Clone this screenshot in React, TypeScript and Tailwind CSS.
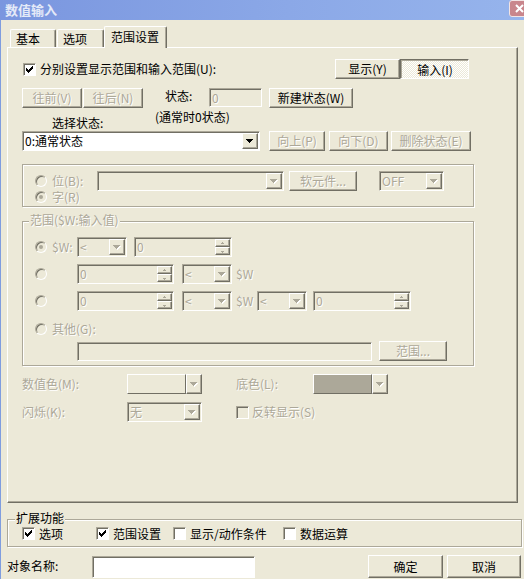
import React from "react";

const D = "text-[#ACA899] [text-shadow:1px_1px_0_#fff]";
const RAISED =
  "border border-t-white border-l-white border-r-[#716F64] border-b-[#716F64] shadow-[inset_-1px_-1px_0_#ACA899]";
const SUNKEN =
  "border border-t-[#ACA899] border-l-[#ACA899] border-r-white border-b-white shadow-[inset_1px_1px_0_#716F64]";
const ETCHED = "border border-[#ACA899] shadow-[inset_1px_1px_0_#fff,1px_1px_0_#fff]";

function Arrow({ disabled }: { disabled?: boolean }) {
  const rows = (dx: number, dy: number, fill: string) => (
    <g fill={fill}>
      <rect x={0 + dx} y={0 + dy} width={7} height={1} />
      <rect x={1 + dx} y={1 + dy} width={5} height={1} />
      <rect x={2 + dx} y={2 + dy} width={3} height={1} />
      <rect x={3 + dx} y={3 + dy} width={1} height={1} />
    </g>
  );
  return (
    <svg width="8" height="5" viewBox="0 0 8 5" shapeRendering="crispEdges">
      {disabled && rows(1, 1, "#ffffff")}
      {rows(0, 0, disabled ? "#ACA899" : "#000000")}
    </svg>
  );
}

function TinyArrow({ up }: { up?: boolean }) {
  return (
    <svg width="5" height="3" viewBox="0 0 5 3" shapeRendering="crispEdges">
      <g fill="#ACA899">
        {up ? (
          <>
            <rect x={2} y={0} width={1} height={1} />
            <rect x={1} y={1} width={3} height={1} />
          </>
        ) : (
          <>
            <rect x={1} y={1} width={3} height={1} />
            <rect x={2} y={2} width={1} height={1} />
          </>
        )}
      </g>
    </svg>
  );
}

function Btn({
  cls,
  disabled,
  children,
}: {
  cls: string;
  disabled?: boolean;
  children: React.ReactNode;
}) {
  return (
    <div
      className={`${RAISED} bg-[#ECE9D8] flex items-center justify-center whitespace-nowrap shrink-0 ${
        disabled ? D : "text-black"
      } ${cls}`}
    >
      {children}
    </div>
  );
}

function Check({ checked, disabled }: { checked?: boolean; disabled?: boolean }) {
  return (
    <div
      className={`w-[13px] h-[13px] shrink-0 ${SUNKEN} ${
        disabled ? "bg-[#ECE9D8]" : "bg-white"
      } flex items-center justify-center`}
    >
      {checked && (
        <svg width="7" height="7" viewBox="0 0 7 7" shapeRendering="crispEdges">
          <g fill="#000">
            <rect x={6} y={0} width={1} height={3} />
            <rect x={5} y={1} width={1} height={3} />
            <rect x={4} y={2} width={1} height={3} />
            <rect x={3} y={3} width={1} height={3} />
            <rect x={2} y={4} width={1} height={3} />
            <rect x={1} y={3} width={1} height={3} />
            <rect x={0} y={2} width={1} height={3} />
          </g>
        </svg>
      )}
    </div>
  );
}

function Radio({ checked }: { checked?: boolean }) {
  return (
    <div
      className={`w-[12px] h-[12px] shrink-0 rounded-full ${SUNKEN} bg-[#ECE9D8] flex items-center justify-center`}
    >
      {checked && <div className="w-[4px] h-[4px] rounded-full bg-[#ACA899]" />}
    </div>
  );
}

function Combo({
  cls,
  text,
  enabled,
}: {
  cls: string;
  text?: string;
  enabled?: boolean;
}) {
  return (
    <div
      className={`${SUNKEN} h-[20px] flex shrink-0 ${enabled ? "bg-white" : "bg-[#ECE9D8]"} ${cls}`}
    >
      <div
        className={`flex-1 flex items-center pl-[2px] overflow-hidden whitespace-nowrap ${
          enabled ? "text-black" : D
        }`}
      >
        {text}
      </div>
      <div
        className={`w-[16px] h-[16px] mt-[1px] mr-[1px] ${RAISED} bg-[#ECE9D8] flex items-center justify-center`}
      >
        <Arrow disabled={!enabled} />
      </div>
    </div>
  );
}

function Spin({ cls }: { cls: string }) {
  return (
    <div className={`${SUNKEN} h-[20px] flex shrink-0 bg-[#ECE9D8] ${cls}`}>
      <div className={`flex-1 flex items-center pl-[2px] ${D}`}>0</div>
      <div className="flex flex-col mt-[1px] mr-[1px] w-[15px]">
        <div className={`h-[8px] ${RAISED} bg-[#ECE9D8] flex items-center justify-center`}>
          <TinyArrow up />
        </div>
        <div className={`h-[8px] ${RAISED} bg-[#ECE9D8] flex items-center justify-center`}>
          <TinyArrow />
        </div>
      </div>
    </div>
  );
}

function ColorCombo({ swatch }: { swatch: string }) {
  return (
    <div className="flex w-[75px] h-[20px] shrink-0">
      <div
        className={`w-[59px] h-[20px] border border-t-white border-l-white border-r-[#716F64] border-b-[#716F64] ${swatch}`}
      />
      <div
        className={`w-[16px] h-[20px] ${RAISED} bg-[#ECE9D8] flex items-center justify-center`}
      >
        <Arrow disabled />
      </div>
    </div>
  );
}

export default function App() {
  return (
    <div className="relative w-[524px] h-[579px] overflow-hidden bg-[#ECE9D8] shadow-[inset_1px_0_0_#7F9DDF] font-['Noto_Sans_CJK_SC','Noto_Sans',sans-serif] text-[12px] leading-[12px] text-black flex flex-col">
      {/* Title bar */}
      <div className="h-[20px] shrink-0 bg-[linear-gradient(to_right,#7A96DF,#8BA8E7_55%,#96B4EC)] flex items-start pl-[5px] pt-[2px]">
        <span className="text-[13px] leading-[15px] font-bold text-[#E4EAF8]">数值输入</span>
      </div>
      <div className="absolute left-[509px] top-0 w-[21px] h-[17px] rounded-[3px] border border-[#F2E4E4] bg-[#C9868C] flex items-center justify-center">
        <svg width="9" height="9" viewBox="0 0 9 9">
          <path d="M1 1L8 8M8 1L1 8" stroke="#fff" strokeWidth="2" />
        </svg>
      </div>

      {/* Tabs */}
      <div className="flex items-end h-[21px] mt-[6px] ml-[10px] shrink-0">
        <div className="w-[46px] h-[18px] border border-b-0 border-t-white border-l-white border-r-[#716F64] shadow-[inset_-1px_0_0_#ACA899] rounded-t-[2px] pl-[5px] pt-[3px]">
          基本
        </div>
        <div className="ml-[1px] w-[47px] h-[18px] border border-b-0 border-t-white border-l-white border-r-[#716F64] shadow-[inset_-1px_0_0_#ACA899] rounded-t-[2px] pl-[5px] pt-[3px]">
          选项
        </div>
        <div className="relative z-10 -mb-[1px] w-[63px] h-[22px] bg-[#ECE9D8] border border-b-0 border-t-white border-l-white border-r-[#716F64] shadow-[inset_-1px_0_0_#ACA899] rounded-t-[2px] pl-[6px] pt-[4px]">
          范围设置
        </div>
      </div>

      {/* Panel */}
      <div
        className={`ml-[7px] w-[511px] h-[456px] shrink-0 ${RAISED} pl-[14px] pt-[11px] flex flex-col`}
      >
        {/* Row A */}
        <div className="h-[20px] w-[452px] flex items-center">
          <div className="ml-[1px]">
            <Check checked />
          </div>
          <span className="ml-[4px] whitespace-nowrap">分别设置显示范围和输入范围(U):</span>
          <div className="ml-auto mr-[5px] flex">
            <Btn cls="w-[65px] h-[20px]">显示(Y)</Btn>
            <div className="w-[69px] h-[20px] border border-t-[#716F64] border-l-[#716F64] border-r-white border-b-white shadow-[inset_1px_1px_0_#ACA899] [background-image:repeating-conic-gradient(#ffffff_0%_25%,#ECE9D8_0%_50%)] [background-size:2px_2px] flex items-center justify-center pt-[1px] pl-[1px]">
              输入(I)
            </div>
          </div>
        </div>

        {/* Row B */}
        <div className="mt-[9px] h-[20px] flex items-start">
          <Btn cls="w-[60px] h-[20px]" disabled>
            往前(V)
          </Btn>
          <Btn cls="ml-[1px] w-[60px] h-[20px]" disabled>
            往后(N)
          </Btn>
          <span className="ml-[22px] w-[44px] mt-[2px] whitespace-nowrap">状态:</span>
          <div className={`w-[53px] h-[19px] ${SUNKEN} bg-[#ECE9D8] flex items-center pl-[2px] ${D}`}>
            0
          </div>
          <Btn cls="ml-[7px] w-[84px] h-[20px]">新建状态(W)</Btn>
        </div>

        {/* Row C */}
        <div className="h-[23px] flex items-start">
          <span className="ml-[30px] w-[103px] mt-[9px] whitespace-nowrap">选择状态:</span>
          <span className="mt-[3px] whitespace-nowrap">(通常时0状态)</span>
        </div>

        {/* Row D */}
        <div className="h-[20px] flex items-start">
          <Combo cls="w-[238px]" text="0:通常状态" enabled />
          <Btn cls="ml-[9px] w-[56px] h-[20px]" disabled>
            向上(P)
          </Btn>
          <Btn cls="ml-[4px] w-[59px] h-[20px]" disabled>
            向下(D)
          </Btn>
          <Btn cls="ml-[3px] w-[80px] h-[20px]" disabled>
            删除状态(E)
          </Btn>
        </div>

        {/* Group 1 */}
        <div className={`mt-[13px] w-[452px] h-[43px] ${ETCHED} pt-[6px] pl-[12px] flex items-start`}>
          <div className="w-[62px] flex flex-col">
            <div className="h-[19px] flex items-center">
              <Radio />
              <span className={`ml-[5px] ${D}`}>位(B):</span>
            </div>
            <div className="h-[13px] flex items-center">
              <Radio checked />
              <span className={`ml-[5px] ${D}`}>字(R)</span>
            </div>
          </div>
          <Combo cls="w-[187px]" />
          <Btn cls="ml-[5px] w-[68px] h-[20px]" disabled>
            软元件...
          </Btn>
          <Combo cls="ml-[22px] w-[65px]" text="OFF" />
        </div>

        {/* Group 2 */}
        <div className={`relative mt-[14px] w-[452px] h-[145px] ${ETCHED} pt-[15px] pl-[12px] flex flex-col`}>
          <span className={`absolute left-[6px] -top-[8px] px-[1px] bg-[#ECE9D8] whitespace-nowrap ${D}`}>
            范围($W:输入值)
          </span>
          <div className="h-[20px] flex items-center">
            <div className="w-[42px] flex items-center">
              <Radio checked />
              <span className={`ml-[5px] ${D}`}>$W:</span>
            </div>
            <Combo cls="w-[50px]" text="<" />
            <Spin cls="ml-[7px] w-[98px]" />
          </div>
          <div className="mt-[7px] h-[20px] flex items-center">
            <div className="w-[42px] flex items-center">
              <Radio />
            </div>
            <Spin cls="w-[97px]" />
            <Combo cls="ml-[8px] w-[50px]" text="<" />
            <span className={`ml-[4px] ${D}`}>$W</span>
          </div>
          <div className="mt-[7px] h-[20px] flex items-center">
            <div className="w-[42px] flex items-center">
              <Radio />
            </div>
            <Spin cls="w-[97px]" />
            <Combo cls="ml-[8px] w-[50px]" text="<" />
            <span className={`ml-[4px] w-[21px] ${D}`}>$W</span>
            <Combo cls="w-[50px]" text="<" />
            <Spin cls="ml-[6px] w-[98px]" />
          </div>
          <div className="mt-[12px] h-[12px] flex items-center">
            <Radio />
            <span className={`ml-[5px] ${D}`}>其他(G):</span>
          </div>
          <div className="mt-[6px] h-[20px] flex items-start">
            <div className={`ml-[42px] mt-[1px] w-[295px] h-[19px] ${SUNKEN} bg-[#ECE9D8]`} />
            <Btn cls="ml-[7px] w-[68px] h-[20px]" disabled>
              范围...
            </Btn>
          </div>
        </div>

        {/* Colors */}
        <div className="mt-[8px] h-[20px] flex items-center">
          <span className={`w-[105px] ${D}`}>数值色(M):</span>
          <ColorCombo swatch="bg-[#ECE9D8]" />
          <span className={`ml-[34px] w-[77px] ${D}`}>底色(L):</span>
          <ColorCombo swatch="bg-[#ACA899]" />
        </div>
        <div className="mt-[8px] h-[20px] flex items-center">
          <span className={`w-[105px] ${D}`}>闪烁(K):</span>
          <Combo cls="w-[75px]" text="无" />
          <div className="ml-[34px]">
            <Check disabled />
          </div>
          <span className={`ml-[3px] ${D}`}>反转显示(S)</span>
        </div>
      </div>

      {/* Extended functions */}
      <div className={`relative mt-[16px] ml-[7px] w-[515px] h-[28px] shrink-0 ${ETCHED} pt-[7px] pl-[14px]`}>
        <span className="absolute left-[7px] -top-[8px] px-[1px] bg-[#ECE9D8] whitespace-nowrap">
          扩展功能
        </span>
        <div className="h-[13px] flex items-center">
          <div className="w-[74px] flex items-center">
            <Check checked />
            <span className="ml-[4px]">选项</span>
          </div>
          <div className="w-[77px] flex items-center">
            <Check checked />
            <span className="ml-[4px]">范围设置</span>
          </div>
          <div className="w-[110px] flex items-center">
            <Check />
            <span className="ml-[4px] whitespace-nowrap">显示/动作条件</span>
          </div>
          <div className="flex items-center">
            <Check />
            <span className="ml-[4px]">数据运算</span>
          </div>
        </div>
      </div>

      {/* Bottom row */}
      <div className="mt-[8px] h-[23px] flex items-start shrink-0">
        <span className="ml-[7px] w-[85px] mt-[5px] whitespace-nowrap">对象名称:</span>
        <div className={`mt-[1px] w-[163px] h-[22px] ${SUNKEN} bg-white`} />
        <Btn cls="ml-[113px] w-[75px] h-[23px]">确定</Btn>
        <Btn cls="ml-[4px] w-[74px] h-[23px]">取消</Btn>
      </div>
    </div>
  );
}
